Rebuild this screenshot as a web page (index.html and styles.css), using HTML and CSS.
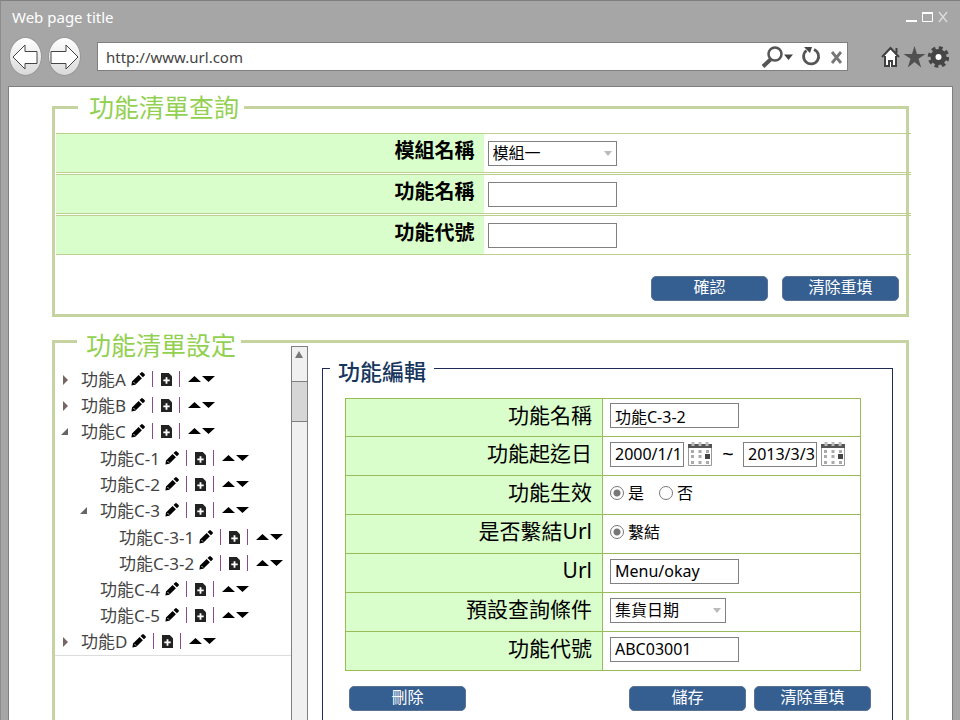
FILE: index.html
```html
<!DOCTYPE html>
<html lang="zh-Hant">
<head>
<meta charset="utf-8">
<title>Web page title</title>
<link rel="stylesheet" href="styles.css">
</head>
<body>
<svg class="defs" aria-hidden="true">
  <symbol id="pencil" viewBox="0 0 14 14"><path d="M1 9.500 7.600 2.900l3.300 3.300L4.300 12.800.400 13.600zM8.500 2l1.700-1.600q.8-.7 1.600 0l1.700 1.700q.8.8 0 1.600l-1.600 1.600z"/><path d="M2.600 10.200l1.300 1.300" stroke="#fff" stroke-width="1"/></symbol>
  <symbol id="doc" viewBox="0 0 12 14"><path fill="#222" d="M0 0h8.500L12 3.500V14H0z"/><path d="M6 4.500v7M2.500 8h7" stroke="#fff" stroke-width="2"/></symbol>
  <symbol id="updown" viewBox="0 0 27 8"><path d="M0 7 6.500 1 13 7zM14 1h13l-6.500 6z"/></symbol>
  <symbol id="closed" viewBox="0 0 8 10"><path fill="#766" d="M2 0 7 5 2 10z"/></symbol>
  <symbol id="open" viewBox="0 0 8 8"><path fill="#666" d="M7 0v7H0z"/></symbol>
  <symbol id="calendar" viewBox="0 0 25 25">
    <path fill="#fff" stroke="#999" d="M.5 3.500h23v20H.5z"/><path fill="#555" d="M0 2h24v4H0z"/>
    <path stroke="#bbb" stroke-width="3" d="M5 0v4M12 0v4M19 0v4"/>
    <path stroke="#aaa" stroke-width="3" stroke-dasharray="3 4.500" d="M3 9.500h18M3 14.500h15M3 20.500h18"/>
    <path fill="#444" d="M17 12h5v5h-5z"/>
  </symbol>
</svg>

<header class="titlebar">
  <span class="title">Web page title</span>
  <svg class="wincontrols" width="43" height="14" viewBox="0 0 43 14" fill="none" stroke="#fff"><path stroke-width="2" d="M0 11h11"/><path d="M16.500 3.500h10v8h-10z"/><path stroke-width="2" d="M16 3h11"/><path stroke="#ddd" stroke-width="1.300" d="M33 2l8 10M41 2l-8 10"/></svg>
</header>

<nav class="toolbar">
  <button class="nav" aria-label="Back"><svg width="27" height="28" viewBox="0 0 27 28"><path fill="#fff" stroke="#444" d="M1 14 13 2v6.500h12v12H13V26z"/></svg></button>
  <button class="nav" aria-label="Forward"><svg width="29" height="28" viewBox="0 0 29 28"><path fill="#fff" stroke="#444" d="M28 14 16 2v6.500H1v12h15V26z"/></svg></button>
  <div class="address">
    <input class="url" aria-label="Address" value="http://www.url.com">
    <svg width="82" height="24" viewBox="0 0 82 24" fill="none" stroke="#555">
      <circle cx="14" cy="9" r="6.500" stroke-width="2.500"/><path stroke-width="4" d="M9.500 14.500 2 21.500"/>
      <path fill="#444" stroke="none" d="M23 9.500h9l-4.500 5.500zM43 2l8 0-2 6z"/>
      <path stroke-width="2.800" d="M53 4.500a7.500 7.500 0 1 1-7.500 1"/>
      <path stroke-width="2.800" stroke="#777" d="M71 7l9 11M80 7 71 18"/>
    </svg>
  </div>
  <svg class="tools" width="68" height="24" viewBox="0 0 68 24">
    <path fill="#fff" d="M4 10l5.500-6L15 10v12H4z"/><path fill="none" stroke="#404040" stroke-width="2" d="M1 12 9.500 3 18 12M4 11v10h4v-5h3v5h4V11M15.500 3v5"/>
    <path fill="#505050" d="M33.500 1l2.500 8h8.500l-7 4.800 2.700 8.700-6.700-5.400-6.700 5.400 2.700-8.700-7-4.800H31z"/>
    <circle cx="57.500" cy="12" r="5.500" fill="#fff" stroke="#454545" stroke-width="5"/><circle cx="57.500" cy="12" r="9" fill="none" stroke="#454545" stroke-width="3.500" stroke-dasharray="3.800 3.270"/>
  </svg>
</nav>

<main class="page">
  <fieldset class="panel">
    <legend>功能清單查詢</legend>
    <div class="query">
      <div class="qrow"><label for="q-module">模組名稱</label><div class="cell"><span class="select"><select id="q-module"><option>模組一</option></select></span></div></div>
      <div class="qrow"><label for="q-name">功能名稱</label><div class="cell"><input class="text" id="q-name"></div></div>
      <div class="qrow"><label for="q-code">功能代號</label><div class="cell"><input class="text" id="q-code"></div></div>
    </div>
    <div class="actions query-actions"><button class="btn">確認</button><button class="btn">清除重填</button></div>
  </fieldset>

  <fieldset class="panel settings">
    <legend>功能清單設定</legend>
    <div class="split">
      <ul class="tree" id="tree">
        <li><div class="node"><svg class="tw"><use href="#closed"/></svg><span>功能A</span></div></li>
        <li><div class="node"><svg class="tw"><use href="#closed"/></svg><span>功能B</span></div></li>
        <li><div class="node"><svg class="tw low"><use href="#open"/></svg><span>功能C</span></div>
          <ul>
            <li><div class="node"><i class="tw"></i><span>功能C-1</span></div></li>
            <li><div class="node"><i class="tw"></i><span>功能C-2</span></div></li>
            <li><div class="node"><svg class="tw low"><use href="#open"/></svg><span>功能C-3</span></div>
              <ul>
                <li><div class="node"><i class="tw"></i><span>功能C-3-1</span></div></li>
                <li><div class="node"><i class="tw"></i><span>功能C-3-2</span></div></li>
              </ul>
            </li>
            <li><div class="node"><i class="tw"></i><span>功能C-4</span></div></li>
            <li><div class="node"><i class="tw"></i><span>功能C-5</span></div></li>
          </ul>
        </li>
        <li><div class="node"><svg class="tw"><use href="#closed"/></svg><span>功能D</span></div></li>
      </ul>
      <div class="scrollbar"><div class="up"></div><div class="thumb"></div></div>
      <fieldset class="editor">
        <legend>功能編輯</legend>
        <div class="form">
          <div class="frow"><label for="f-name">功能名稱</label><div class="cell"><input class="text" id="f-name" value="功能C-3-2"></div></div>
          <div class="frow"><label for="f-from">功能起迄日</label><div class="cell dates"><input class="text date" id="f-from" value="2000/1/1"><button class="cal" aria-label="選擇起日"><svg><use href="#calendar"/></svg></button><span class="tilde">~</span><input class="text date" aria-label="迄日" value="2013/3/3"><button class="cal" aria-label="選擇迄日"><svg><use href="#calendar"/></svg></button></div></div>
          <div class="frow"><span class="label">功能生效</span><div class="cell radios"><label><input type="radio" name="active" checked>是</label><label><input type="radio" name="active">否</label></div></div>
          <div class="frow"><span class="label">是否繫結Url</span><div class="cell radios"><label><input type="radio" name="bind" checked>繫結</label></div></div>
          <div class="frow"><label for="f-url">Url</label><div class="cell"><input class="text" id="f-url" value="Menu/okay"></div></div>
          <div class="frow"><label for="f-cond">預設查詢條件</label><div class="cell"><span class="select short"><select id="f-cond"><option>集貨日期</option></select></span></div></div>
          <div class="frow"><label for="f-code">功能代號</label><div class="cell"><input class="text" id="f-code" value="ABC03001"></div></div>
        </div>
        <div class="actions editor-actions"><button class="btn first">刪除</button><button class="btn">儲存</button><button class="btn">清除重填</button></div>
      </fieldset>
    </div>
  </fieldset>
</main>
<script src="tree.js"></script>
</body>
</html>
```
FILE: styles.css
```css
* { box-sizing: border-box; }
body {
  margin: 0;
  height: 100vh;
  display: flex;
  flex-direction: column;
  overflow: hidden;
  background: #a6a6a6;
  border-top: 1px solid #7f7f7f;
  border-left: 1px solid #8c8c8c;
  font: 16px/24px "Noto Sans", "Noto Sans CJK TC", sans-serif;
  color: #000;
}
button, input, select { font: inherit; color: inherit; margin: 0; }
fieldset { margin: 0; padding: 0; min-width: 0; }
ul { list-style: none; margin: 0; padding: 0; }
.defs { display: none; }

.titlebar {
  flex: none;
  height: 32px;
  display: flex;
  align-items: center;
  justify-content: space-between;
  padding: 0 11px;
  color: #fff;
  font-size: 15px;
}
.toolbar {
  flex: none;
  height: 53px;
  display: flex;
  align-items: center;
  padding: 0 11px 6px 8px;
}
.nav {
  flex: none;
  width: 33px;
  height: 39px;
  margin-right: 6px;
  padding: 0;
  display: flex;
  align-items: center;
  justify-content: center;
  border: 1px solid #999;
  border-radius: 50%;
  background: linear-gradient(#fff, #d9d9d9);
}
.nav svg { flex: none; }
.address {
  flex: 1;
  height: 29px;
  margin: 0 33px 0 10px;
  padding-right: 4px;
  display: flex;
  align-items: center;
  background: #fff;
  border: 1px solid #7f7f7f;
}
.url {
  flex: 1;
  min-width: 0;
  border: 0;
  padding: 0 8px;
  background: none;
  color: #444;
  font-size: 15px;
}
.page {
  flex: 1;
  min-height: 0;
  overflow: hidden;
  margin: 0 7px;
  padding: 3px 43px 0;
  background: #fff;
  border: 1px solid #7f7f7f;
  border-bottom: 0;
}

.panel { border: 3px solid #c4d3a0; }
.panel > legend {
  margin-left: 23px;
  padding: 0 5px 0 11px;
  color: #92d050;
  font-size: 25px;
  line-height: 34px;
}
.settings { margin-top: 7px; padding-bottom: 60px; }
.settings > legend { margin-left: 22px; padding: 8px 5px 0 9px; line-height: 26px; }

.query {
  display: grid;
  gap: 1px;
  margin: 9px -5px 0 1px;
}
.qrow {
  display: grid;
  grid-template-columns: 1fr 1fr;
  height: 40px;
  border: solid #bccf8c;
  border-width: 1px 0;
}
.qrow > label {
  background: #d9fdcb;
  padding: 3px 9px 0 0;
  text-align: right;
  font-size: 20px;
  line-height: 28px;
  font-weight: 700;
}
.cell { display: flex; align-items: center; padding-left: 4px; }

.text, .select select {
  width: 129px;
  height: 25px;
  padding: 0 4px;
  border: 1px solid #808080;
  border-radius: 0;
  background: #fff;
}
.select { position: relative; display: flex; }
.select select { appearance: none; line-height: 23px; }
.select.short select { width: 116px; }
.select::after {
  content: "";
  position: absolute;
  right: 5px;
  top: 10px;
  border: 4px solid transparent;
  border-top: 5px solid #bbb;
  border-bottom: 0;
  pointer-events: none;
}

.actions { display: flex; justify-content: flex-end; }
.query-actions { gap: 14px; padding: 21px 7px 13px 0; }
.editor-actions { gap: 8px; padding: 15px 21px 50px 26px; }
.first { margin-right: auto; }
.btn {
  width: 117px;
  height: 25px;
  padding: 0 0 2px;
  border: 1px solid #5b7291;
  border-radius: 5px;
  background: #365f91;
  color: #fff;
  line-height: 21px;
}

.split {
  display: grid;
  grid-template-columns: 236px 17px minmax(0, 1fr);
  margin-top: -12px;
}
.tree {
  align-self: start;
  padding: 21px 0 0 6px;
  border-bottom: 1px solid #ddd;
  color: #444;
  font-size: 17px;
}
.tree ul { padding: 1px 0 0 19px; }
.node { display: flex; align-items: center; height: 26px; white-space: nowrap; }
.node > span { line-height: 26px; }
.tw { width: 8px; height: 10px; margin-right: 12px; }
.tw.low { height: 8px; }
.ops { display: flex; align-items: center; height: 22px; padding: 0 0 2px 5px; }
.pencil { width: 14px; height: 14px; }
.doc { width: 11px; height: 13px; }
.updown { width: 27px; height: 8px; }
.bar { width: 1px; height: 16px; margin: 0 8px 0 7px; background: #8a4a8f; }

.scrollbar { border: solid #7f7f7f; border-width: 1px 1px 0; background: #f0f0f0; }
.up { height: 34px; padding: 4px 3px; }
.up::before {
  content: "";
  display: block;
  width: 0;
  border: 4px solid transparent;
  border-top: 0;
  border-bottom: 7px solid #777;
}
.thumb { height: 41px; background: #d6d6d6; border: solid #7f7f7f; border-width: 1px 0; }

.editor { margin: 5px 13px 0 14px; border: 1px solid #1f2a55; }
.editor > legend {
  margin-left: 7px;
  padding: 6px 8px 0;
  color: #17365d;
  font-size: 22px;
  line-height: 28px;
  font-weight: 500;
}
.form { margin: 13px 31px 0 22px; border: 1px solid #9bbb59; border-bottom: 0; }
.frow {
  display: grid;
  grid-template-columns: 1fr 1fr;
  height: 39px;
  border-bottom: 1px solid #9bbb59;
}
.frow:first-child { height: 38px; }
.frow > .cell { padding: 0 0 4px 7px; }
.frow > label, .label {
  padding: 2px 10px 0 0;
  border-right: 1px solid #9bbb59;
  background: #d9fdcb;
  text-align: right;
  font-size: 21px;
  line-height: 28px;
}
.text.date { width: 74px; padding-right: 0; }
.cal { width: 25px; height: 25px; margin-left: 4px; padding: 0; border: 0; background: none; }
.cal svg { display: block; width: 25px; height: 25px; }
.tilde { width: 30px; text-align: center; font-size: 20px; }
.radios { gap: 15px; }
.radios label { display: flex; align-items: center; }
.radios input {
  appearance: none;
  width: 14px;
  height: 14px;
  margin-right: 4px;
  border: 1px solid #777;
  border-radius: 50%;
  background: #fff;
}
.radios input:checked { background: radial-gradient(circle, #777 3px, #fff 4px); }
```
FILE: tree.js
```js
const icon = (name) => `<svg class="${name}"><use href="#${name}"/></svg>`;
document.querySelectorAll("#tree .node").forEach((node) => {
  const ops = document.createElement("div");
  ops.className = "ops";
  ops.innerHTML = icon("pencil") + '<i class="bar"></i>' + icon("doc") + '<i class="bar"></i>' + icon("updown");
  node.append(ops);
});
```
